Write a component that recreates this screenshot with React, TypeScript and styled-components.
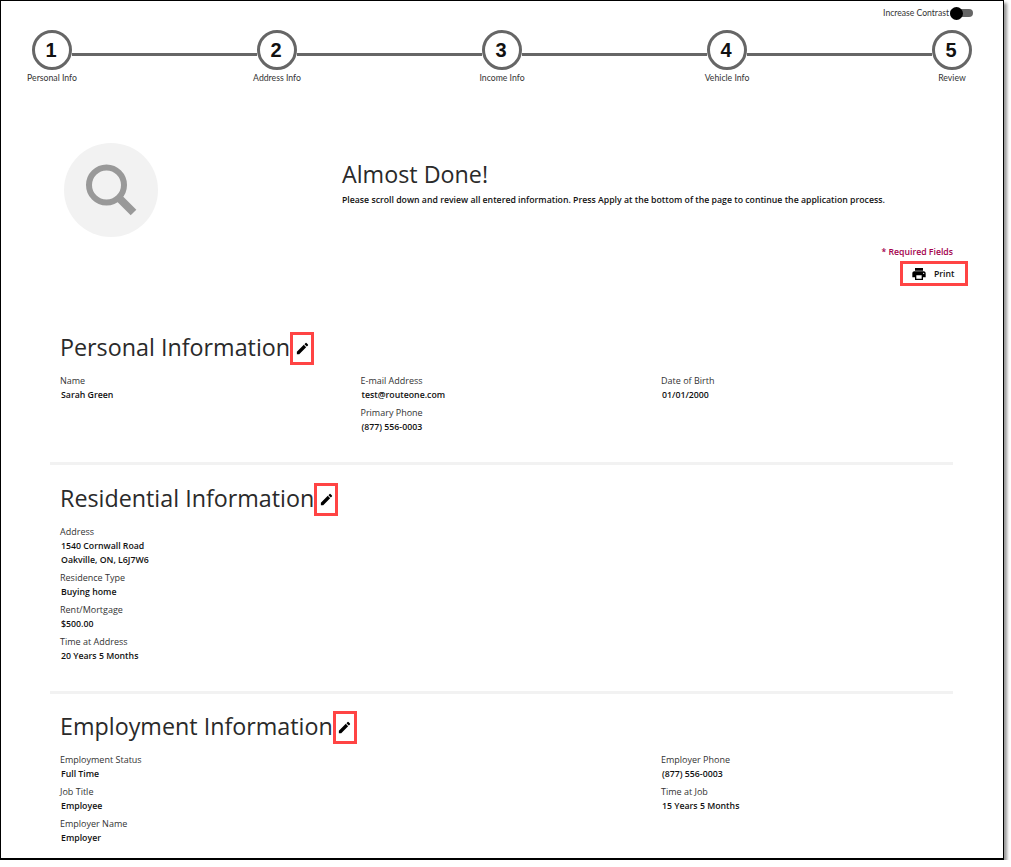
import React from 'react';
import styled, { createGlobalStyle } from 'styled-components';
import { MdEdit, MdPrint } from 'react-icons/md';

const steps = ['Personal Info', 'Address Info', 'Income Info', 'Vehicle Info', 'Review'];

const sections = [
  {
    title: 'Personal Information',
    columns: [
      [{ label: 'Name', value: ['Sarah Green'] }],
      [
        { label: 'E-mail Address', value: ['test@routeone.com'] },
        { label: 'Primary Phone', value: ['(877) 556-0003'] },
      ],
      [{ label: 'Date of Birth', value: ['01/01/2000'] }],
    ],
  },
  {
    title: 'Residential Information',
    columns: [
      [
        { label: 'Address', value: ['1540 Cornwall Road', 'Oakville, ON, L6J7W6'] },
        { label: 'Residence Type', value: ['Buying home'] },
        { label: 'Rent/Mortgage', value: ['$500.00'] },
        { label: 'Time at Address', value: ['20 Years 5 Months'] },
      ],
    ],
  },
  {
    title: 'Employment Information',
    columns: [
      [
        { label: 'Employment Status', value: ['Full Time'] },
        { label: 'Job Title', value: ['Employee'] },
        { label: 'Employer Name', value: ['Employer'] },
      ],
      [],
      [
        { label: 'Employer Phone', value: ['(877) 556-0003'] },
        { label: 'Time at Job', value: ['15 Years 5 Months'] },
      ],
    ],
  },
];

function App() {
  return (
    <Frame>
      <GlobalStyle />
      <ContrastRow>
        <ContrastLabel>Increase Contrast</ContrastLabel>
        <Toggle />
      </ContrastRow>

      <Stepper>
        {steps.map((step, index) => (
          <React.Fragment key={step}>
            {index > 0 && <Connector />}
            <Step>
              <StepCircle>{index + 1}</StepCircle>
              <StepLabel>{step}</StepLabel>
            </Step>
          </React.Fragment>
        ))}
      </Stepper>

      <Hero>
        <HeroIconCol>
          <HeroCircle>
            <svg width="56" height="56" viewBox="0 0 56 56" fill="none">
              <circle cx="23.5" cy="23" r="17.5" stroke="#999" strokeWidth="6" />
              <path d="M36 36 L50.5 50.5" stroke="#999" strokeWidth="8" />
            </svg>
          </HeroCircle>
        </HeroIconCol>
        <HeroText>
          <HeroTitle>Almost Done!</HeroTitle>
          <HeroNote>
            Please scroll down and review all entered information. Press Apply at the bottom of the page to continue the application process.
          </HeroNote>
        </HeroText>
      </Hero>

      <Actions>
        <Required>* Required Fields</Required>
        <PrintButton>
          <MdPrint size={16} color="#000" />
          Print
        </PrintButton>
      </Actions>

      {sections.map((section, index) => (
        <Section key={section.title} $last={index === sections.length - 1}>
          <TitleRow>
            <SectionTitle>{section.title}</SectionTitle>
            <EditButton>
              <MdEdit size={15} color="#000" />
            </EditButton>
          </TitleRow>
          <Fields>
            {section.columns.map((column, columnIndex) => (
              <div key={columnIndex}>
                {column.map((field) => (
                  <Field key={field.label}>
                    <FieldLabel>{field.label}</FieldLabel>
                    {field.value.map((line) => (
                      <FieldValue key={line}>{line}</FieldValue>
                    ))}
                  </Field>
                ))}
              </div>
            ))}
          </Fields>
        </Section>
      ))}
    </Frame>
  );
}

const GlobalStyle = createGlobalStyle`
  html, body {
    margin: 0;
    background: #fff;
  }
  body {
    font-family: 'Open Sans', 'Liberation Sans', sans-serif;
    color: #212529;
  }
`;

const Frame = styled.div`
  box-sizing: border-box;
  width: 1004px;
  height: 860px;
  overflow: hidden;
  border: 1px solid #000;
  border-width: 1px 1px 2px 1px;
  box-shadow: 3px 3px 3px #999;
  background: #fff;
`;

const ContrastRow = styled.div`
  display: flex;
  justify-content: flex-end;
  align-items: center;
  gap: 1px;
  height: 14px;
  margin-top: 5px;
  padding-right: 30px;
`;

const ContrastLabel = styled.span`
  font-family: Lato, sans-serif;
  font-size: 8.6px;
  color: #333;
`;

const Toggle = styled.span`
  position: relative;
  display: block;
  width: 23px;
  height: 8px;
  border-radius: 4px;
  background: #666;

  &::before {
    content: '';
    position: absolute;
    left: 0;
    top: -2.5px;
    width: 13px;
    height: 13px;
    border-radius: 50%;
    background: #000;
  }
`;

const Stepper = styled.div`
  display: flex;
  align-items: flex-start;
  padding: 10px 31px 0 31px;
`;

const Step = styled.div`
  display: flex;
  flex-direction: column;
  align-items: center;
  width: 40px;
  flex: none;
`;

const StepCircle = styled.div`
  box-sizing: border-box;
  display: flex;
  align-items: center;
  justify-content: center;
  width: 40px;
  height: 40px;
  padding: 1px 2px 0 0;
  border: 3px solid #666;
  border-radius: 50%;
  font-family: 'Liberation Sans', sans-serif;
  font-size: 20px;
  font-weight: 700;
  color: #111;
`;

const StepLabel = styled.div`
  margin-top: 1px;
  font-family: Lato, sans-serif;
  font-size: 8.7px;
  line-height: 13px;
  white-space: nowrap;
  color: #333;
`;

const Connector = styled.div`
  flex: 1;
  height: 3px;
  margin-top: 23px;
  background: #666;
`;

const Hero = styled.div`
  display: flex;
  margin-top: 59px;
  padding-left: 63px;
`;

const HeroIconCol = styled.div`
  width: 278px;
  flex: none;
`;

const HeroCircle = styled.div`
  display: flex;
  align-items: center;
  justify-content: center;
  width: 94px;
  height: 94px;
  border-radius: 50%;
  background: #f2f2f2;
`;

const HeroText = styled.div`
  padding-top: 15px;
`;

const HeroTitle = styled.h1`
  margin: 0;
  font-size: 23.3px;
  line-height: 33px;
  font-weight: 500;
  color: #2a2a2a;
`;

const HeroNote = styled.p`
  margin: 3px 0 0;
  font-size: 8.72px;
  line-height: 13px;
  font-weight: 600;
  color: #111;
`;

const Actions = styled.div`
  display: flex;
  flex-direction: column;
  align-items: flex-end;
  margin-top: 9px;
  padding-right: 35px;
`;

const Required = styled.div`
  margin-right: 15px;
  font-size: 8.7px;
  line-height: 13px;
  font-weight: 600;
  color: #a3004c;
`;

const PrintButton = styled.div`
  box-sizing: border-box;
  display: flex;
  align-items: center;
  gap: 7px;
  width: 68px;
  height: 25px;
  margin-top: 2px;
  padding-left: 8px;
  border: 3px solid #f44;
  font-size: 8.7px;
  font-weight: 600;
  color: #111;
`;

const Section = styled.section<{ $last?: boolean }>`
  margin: 0 50px 0 49px;
  padding: 0 0 ${(p) => (p.$last ? 0 : 24)}px;
  border-bottom: ${(p) => (p.$last ? 'none' : '3px solid #f2f2f2')};
  &:first-of-type {
    margin-top: 45px;
  }
  & + & {
    padding-top: 16.5px;
  }
`;

const TitleRow = styled.div`
  display: flex;
  align-items: flex-start;
  padding-left: 10px;
`;

const SectionTitle = styled.h2`
  margin: 0;
  font-size: 23.3px;
  line-height: 32px;
  font-weight: 500;
  color: #2a2a2a;
`;

const EditButton = styled.div`
  box-sizing: border-box;
  display: flex;
  align-items: center;
  justify-content: center;
  width: 24px;
  height: 33px;
  margin-top: 1px;
  border: 3px solid #f44;
`;

const Fields = styled.div`
  display: grid;
  grid-template-columns: repeat(3, 300.5px);
  margin-top: 9px;
  padding-left: 10px;
`;

const Field = styled.div`
  margin-bottom: 4px;
`;

const FieldLabel = styled.div`
  font-size: 9px;
  line-height: 14px;
  color: #333;
`;

const FieldValue = styled.div`
  font-size: 8.75px;
  line-height: 14px;
  font-weight: 600;
  color: #111;
  padding-left: 1px;
`;

export default App;
